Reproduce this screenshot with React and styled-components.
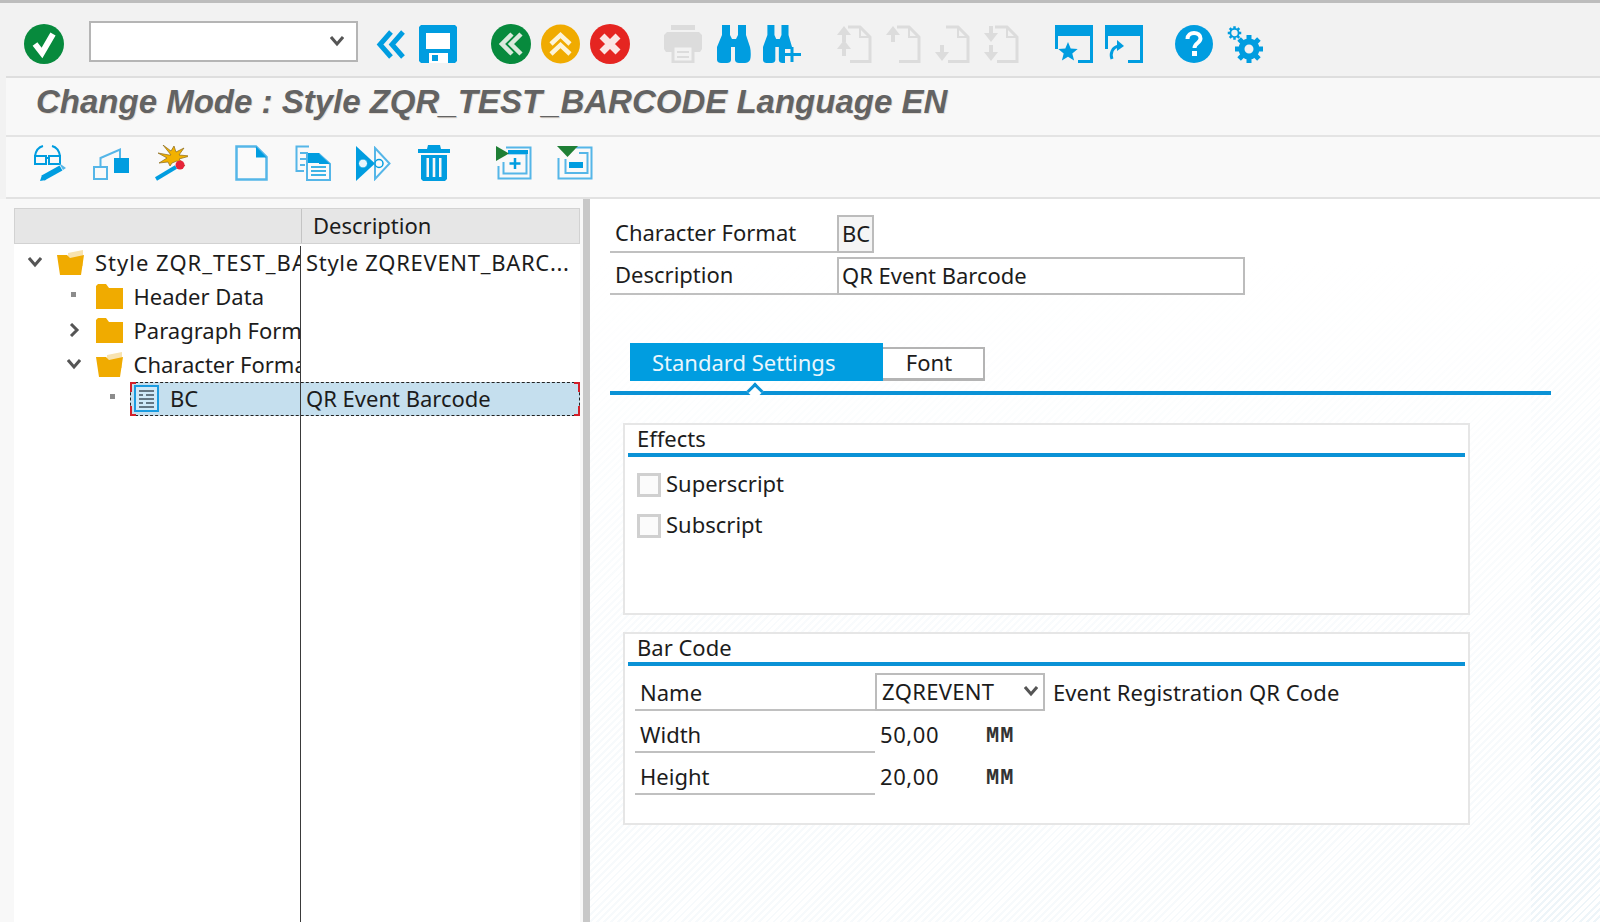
import React from 'react'
import styled, { createGlobalStyle } from 'styled-components'

const BLUE = '#009de0'
const LIGHT = '#55b6e8'
const OFF = '#dcdcdc'
const FONT = '"Noto Sans", "Open Sans", sans-serif'

const Global = createGlobalStyle`
  html, body { margin: 0; height: 100%; overflow: hidden; }
  body { font-family: ${FONT}; background: #f2f2f2; color: #1c1c1c; }
`

const Svg = ({ w, h, children }) => (
  <svg width={w} height={h} viewBox={`0 0 ${w} ${h}`} fill="none">{children}</svg>
)

const CheckIcon = () => (
  <Svg w={40} h={40}>
    <circle cx="20" cy="20" r="20" fill="#078a3d" />
    <path d="M11 20l7 9 11-19" stroke="#fff" strokeWidth="6" />
  </Svg>
)
const DoubleLeft = () => (
  <Svg w={30} h={29}>
    <path d="M15 2L4 14.500 15 27M27 2L16 14.500 27 27" stroke={BLUE} strokeWidth="5" />
  </Svg>
)
const SaveIcon = () => (
  <Svg w={38} h={38}>
    <path d="M2 0h34l2 2v34l-2 2H2l-2-2V2z" fill={BLUE} />
    <path d="M7 8h24v16H7zM10 28h19v10H10z" fill="#fff" />
    <path d="M13 30h6v6h-6z" fill={BLUE} />
  </Svg>
)
const RoundBack = () => (
  <Svg w={40} h={40}>
    <circle cx="20" cy="20" r="20" fill="#078a3d" />
    <path d="M21 10l-10 10 10 10M30 10L20 20l10 10" stroke="#dbe9dd" strokeWidth="4.500" />
  </Svg>
)
const RoundUp = () => (
  <Svg w={39} h={40}>
    <circle cx="19.500" cy="20" r="19.500" fill="#f0ab00" />
    <path d="M10 20l9.500-9 9.500 9M10 30l9.500-9 9.500 9" stroke="#fdf4d8" strokeWidth="4.500" />
  </Svg>
)
const RoundCancel = () => (
  <Svg w={40} h={40}>
    <circle cx="20" cy="20" r="20" fill="#e52521" />
    <path d="M12 12l16 16M28 12L12 28" stroke="#fbe6e4" strokeWidth="7" />
  </Svg>
)
const PrintIcon = () => (
  <Svg w={38} h={38}>
    <path d="M7 0h24v5H7zM3 7h32l3 3v14l-2 3H2l-2-3V10z" fill={OFF} />
    <path d="M8 20h22v18H8z" fill="#f2f2f2" />
    <path d="M9 21h20v16H9z" stroke={OFF} strokeWidth="3" />
    <path d="M13 27h12M13 32h12" stroke={OFF} strokeWidth="2" />
  </Svg>
)
const BINO = 'M5 0h8v10l2 4h4l2-4V0h8v10l4 12c1 4 1 10 0 13-1 2-3 3-5 3h-6c-2 0-4-1-4-3V22h-4v13c0 2-2 3-4 3H4c-2 0-4-1-4-3-1-3-1-9 0-13L5 10z'
const FindIcon = () => (
  <Svg w={34} h={38}><path d={BINO} fill={BLUE} /></Svg>
)
const FindNextIcon = () => (
  <Svg w={38} h={38}>
    <path d={BINO} fill={BLUE} transform="scale(.88 1)" />
    <path d="M22 24h16v14H22z" fill="#f2f2f2" />
    <path d="M29 22v15M21 29.500h17" stroke={BLUE} strokeWidth="3" />
  </Svg>
)
const PageIcon = ({ top, bottom }) => (
  <Svg w={35} h={38}>
    <path d="M11 2h12l10 10v24.500H13" stroke={OFF} strokeWidth="3" />
    <path d="M23 2v10h10" stroke={OFF} strokeWidth="2" />
    {top === 'up' && <path d="M7 1l7 9H9v7H5v-7H0z" fill={OFF} />}
    {top === 'down' && <path d="M7 17l7-9H9V1H5v7H0z" fill={OFF} />}
    {bottom === 'up' && <path d="M7 15l7 9H9v7H5v-7H0z" fill={OFF} />}
    {bottom === 'down' && <path d="M7 36l7-9H9v-7H5v7H0z" fill={OFF} />}
  </Svg>
)
const WindowFrame = ({ children }) => (
  <Svg w={38} h={38}>
    <path d="M0 0h38v38H23v-3h12V11H3v13H0z" fill={BLUE} />
    {children}
  </Svg>
)
const HelpIcon = () => (
  <Svg w={38} h={40}>
    <circle cx="19" cy="20" r="19" fill={BLUE} />
    <path d="M12.500 15c0-4 3-6 6.500-6s6.500 2 6.500 5.500c0 4.500-6 4.500-6 9.500" stroke="#fff" strokeWidth="4" />
    <path d="M17 27h5v5h-5z" fill="#fff" />
  </Svg>
)
const Gear = ({ cx, cy, r, tooth, sw, fillHole }) => (
  <g fill={BLUE}>
    {[0, 45, 90, 135, 180, 225, 270, 315].map((a) => (
      <rect key={a} x={cx - tooth / 2} y={cy - r - tooth * 0.7} width={tooth} height={tooth} transform={`rotate(${a} ${cx} ${cy})`} />
    ))}
    <circle cx={cx} cy={cy} r={r - sw / 2} fill={fillHole} stroke={BLUE} strokeWidth={sw} />
  </g>
)
const GearsIcon = () => (
  <Svg w={37} h={38}>
    <Gear cx={7.500} cy={8} r={5} tooth={2.500} sw={1.800} fillHole="#f2f2f2" />
    <Gear cx={22} cy={24} r={10.500} tooth={5} sw={6} fillHole="#f2f2f2" />
  </Svg>
)

const GlassesIcon = () => (
  <Svg w={35} h={36}>
    <path d="M2 11h11v8H2zM16 11h11v8H16zM13 13h3M2 11C3 5 6 2 10 1M27 11c-1-6-4-9-8-10" stroke={BLUE} strokeWidth="2" />
    <path d="M10 33l18-10" stroke={BLUE} strokeWidth="6" />
    <path d="M7 36l2-6 4 5z" fill={BLUE} />
    <path d="M26 18l7 5-3 2z" fill={LIGHT} />
  </Svg>
)
const HierarchyIcon = () => (
  <Svg w={36} h={33}>
    <path d="M1 20h13v12H1zM7.500 20v-9L27 2.500V11" stroke={LIGHT} strokeWidth="2" />
    <path d="M21 11h15v15H21z" fill={BLUE} />
  </Svg>
)
const WandIcon = () => (
  <Svg w={34} h={36}>
    <path d="M17 10L9 0l8 6 3-5 2 6 8-4-5 7 11 1-11 3 6 7-8-5-5 2-2 3-2-4-9 1 8-5-9-5 11 2z" fill="#f2b100" stroke="#8a6a1c" strokeWidth=".7" />
    <path d="M2 34l20-12" stroke={BLUE} strokeWidth="4" />
    <circle cx="26" cy="20" r="4.500" fill="#e6243a" />
  </Svg>
)
const DocIcon = () => (
  <Svg w={33} h={36}>
    <path d="M1.500 1.500H21L31.500 12v22.500h-30z" fill="#fafafa" stroke={LIGHT} strokeWidth="2.500" />
    <path d="M21 1.500L31.500 12.500H21z" fill={BLUE} />
  </Svg>
)
const CopyIcon = () => (
  <Svg w={36} h={36}>
    <path d="M14 1.500H1.500V26H9M5 8h8M5 14h6M5 20h5" stroke={LIGHT} strokeWidth="2" />
    <path d="M12 9h12l11 10v16H12z" fill="#fafafa" stroke={LIGHT} strokeWidth="2" />
    <path d="M13 8h11l2 10H13z" fill={BLUE} />
    <path d="M24 9l11 10H24z" fill={BLUE} />
    <path d="M16 22h15M16 26h15M16 30h15" stroke={BLUE} strokeWidth="1.500" />
  </Svg>
)
const VariantIcon = () => (
  <Svg w={35} h={35}>
    <path d="M0 0l19 17.500L0 35z" fill={BLUE} />
    <path d="M19 2l14.500 15.500L19 33z" fill="#fafafa" stroke={LIGHT} strokeWidth="2" />
    <circle cx="7" cy="17.500" r="4.500" fill="#e8f5fc" stroke={BLUE} />
    <circle cx="23" cy="17.500" r="4" fill="#fafafa" stroke={BLUE} strokeWidth="1.500" />
  </Svg>
)
const TrashIcon = () => (
  <Svg w={32} h={36}>
    <path d="M10 0h12l1 4h9v4H0V4h9z" fill={BLUE} />
    <path d="M3 10h26v24l-2 2H5l-2-2z" fill={BLUE} />
    <path d="M8.500 13h2.500v19H8.500zM14.700 13h2.600v19h-2.600zM21 13h2.500v19H21z" fill="#f8f8f8" />
  </Svg>
)
const AddIcon = () => (
  <Svg w={36} h={34}>
    <path d="M10 1.500h24.500v31H2.500V20" stroke={LIGHT} strokeWidth="2" />
    <path d="M12 7.500h18.500v20H7.500V16" stroke={LIGHT} strokeWidth="2" />
    <path d="M12 4h20v4H12z" fill={BLUE} />
    <path d="M19 12v11M13.500 17.500h11" stroke={BLUE} strokeWidth="2.500" />
    <path d="M0 0l13 7.500L0 15z" fill="#1f7f35" />
  </Svg>
)
const RemoveIcon = () => (
  <Svg w={36} h={34}>
    <path d="M19 1.500h15.500v31H1.500V12" stroke={LIGHT} strokeWidth="2" />
    <path d="M22 7h8.500v20H8.500V13" stroke={LIGHT} strokeWidth="2" />
    <path d="M12 16h14v6H12z" fill={BLUE} />
    <path d="M0 0h21L10.500 11z" fill="#1f7f35" />
  </Svg>
)

const FolderClosed = () => (
  <Svg w={27} h={25}>
    <path d="M0 2l2-2h8l3 4h14v21H0z" fill="#f0ab00" />
  </Svg>
)
const FolderOpen = () => (
  <Svg w={27} h={25}>
    <path d="M11 3l15-3v16H11z" fill="#f8e3b0" />
    <path d="M0 5h10l3 3 14-3-3 20H3z" fill="#f0ab00" />
  </Svg>
)
const FormatIcon = () => (
  <Svg w={25} h={27}>
    <path d="M1 1h23v25H1z" fill="#cfe9f8" stroke="#1a9be0" strokeWidth="2" />
    <path d="M5 6h15M5 10h4M12 10h8M5 14h15M5 18h4M12 18h8M5 22h15" stroke="#41525e" strokeWidth="1.500" />
  </Svg>
)
const Chevron = ({ dir }) => (
  <Svg w={14} h={14}>
    {dir === 'down'
      ? <path d="M1 3l6 7 6-7" stroke="#555" strokeWidth="3" />
      : <path d="M4 1l6 6-6 6" stroke="#555" strokeWidth="3" />}
  </Svg>
)

const Page = styled.div`
  height: 100vh;
  display: flex;
  flex-direction: column;
  border-top: 3px solid #bdbdbd;
  box-sizing: border-box;
  overflow: hidden;
`
const Toolbar = styled.div`
  flex: none;
  height: 73px;
  box-sizing: border-box;
  padding: 9px 0 0 24px;
  display: flex;
  align-items: center;
`
const Tool = styled.span`
  flex: none;
  display: flex;
  margin-left: ${({ $gap }) => $gap || 0}px;
`
const CommandField = styled.div`
  flex: none;
  width: 269px;
  height: 41px;
  margin: 0 0 6px 25px;
  box-sizing: border-box;
  border: 2px solid #b5b5b5;
  background: #fff;
  display: flex;
  align-items: center;
  justify-content: flex-end;
  padding-right: 12px;
`
const TitleBar = styled.div`
  flex: none;
  height: 61px;
  box-sizing: border-box;
  margin-left: 6px;
  padding: 0 0 9px 30px;
  display: flex;
  align-items: center;
  border-top: 2px solid #dedede;
  border-bottom: 2px solid #e4e4e4;
  background: #f8f8f8;
  font: italic bold 33px "Liberation Sans", Arial, sans-serif;
  color: #636363;
  text-shadow: 1px 1px 0 rgba(190, 170, 150, .35);
`
const AppToolbar = styled.div`
  flex: none;
  height: 62px;
  box-sizing: border-box;
  margin-left: 6px;
  padding: 0 0 8px 27px;
  display: flex;
  align-items: center;
  background: #f9f9f9;
  border-bottom: 2px solid #e2e2e2;
`
const Workspace = styled.div`
  flex: 1;
  min-height: 0;
  display: flex;
`
const TreePanel = styled.div`
  flex: none;
  width: 583px;
  box-sizing: border-box;
  padding: 9px 3px 0 14px;
  background: #f8f8f8;
  display: flex;
`
const Splitter = styled.div`
  flex: none;
  width: 7px;
  background: #c8c8c8;
`
const Tree = styled.div`
  flex: 1;
  display: flex;
  flex-direction: column;
  background: #fff;
  font-size: 22px;
  white-space: nowrap;
`
const TreeHead = styled.div`
  flex: none;
  height: 36px;
  margin-bottom: 2px;
  box-sizing: border-box;
  display: grid;
  grid-template-columns: 286px 1fr;
  background: #e6e6e6;
  border: 1px solid #d2d2d2;
`
const HeadCell = styled.div`
  border-left: 1px solid ${({ $plain }) => ($plain ? 'transparent' : '#c4c4c4')};
  padding-left: 11px;
  line-height: 33px;
`
const TreeRow = styled.div`
  position: relative;
  flex: none;
  height: 34px;
  display: grid;
  grid-template-columns: 286px 1fr;

  ${({ $selected }) => $selected && `
    &::before {
      content: '';
      position: absolute;
      left: 116px;
      right: 0;
      top: 0;
      bottom: 0;
      background: #c5dfee;
      border: 1px dashed #222;
    }
    &::after {
      content: '';
      position: absolute;
      left: 116px;
      right: 0;
      top: 0;
      bottom: 0;
      background:
        linear-gradient(#d3202a, #d3202a) 0 0 / 6px 2px no-repeat,
        linear-gradient(#d3202a, #d3202a) 0 0 / 2px 10px no-repeat,
        linear-gradient(#d3202a, #d3202a) 0 100% / 6px 2px no-repeat,
        linear-gradient(#d3202a, #d3202a) 0 100% / 2px 10px no-repeat,
        linear-gradient(#d3202a, #d3202a) 100% 0 / 6px 2px no-repeat,
        linear-gradient(#d3202a, #d3202a) 100% 0 / 2px 10px no-repeat,
        linear-gradient(#d3202a, #d3202a) 100% 100% / 6px 2px no-repeat,
        linear-gradient(#d3202a, #d3202a) 100% 100% / 2px 10px no-repeat;
    }
  `}
`
const NodeCell = styled.div`
  position: relative;
  z-index: 1;
  overflow: hidden;
  display: flex;
  align-items: center;
  padding: 0 0 2px ${({ $depth }) => 14 + $depth * 38.5}px;
  letter-spacing: ${({ $caps }) => ($caps ? 1 : 0)}px;
`
const Twisty = styled.span`
  flex: none;
  width: 14px;
  margin-right: 15px;
  display: flex;
  justify-content: center;
`
const Bullet = styled.span`
  width: 5px;
  height: 5px;
  background: #8c8c8c;
  margin-bottom: 4px;
`
const NodeIcon = styled.span`
  flex: none;
  display: flex;
  margin-right: 11px;
`
const DescCell = styled.div`
  position: relative;
  z-index: 1;
  border-left: 1px solid #3a3a3a;
  padding-left: 5px;
  line-height: 33px;
  overflow: hidden;
  letter-spacing: ${({ $caps }) => ($caps ? 0.7 : 0)}px;
`
const TreeFill = styled.div`
  flex: 1;
  margin-left: 286px;
  border-left: 1px solid #3a3a3a;
`
const Detail = styled.div`
  flex: 1;
  min-width: 0;
  box-sizing: border-box;
  padding: 16px 0 0 20px;
  font-size: 22px;
  background:
    linear-gradient(to right, rgba(255, 255, 255, .55) 0 941px, transparent 941px),
    linear-gradient(to bottom, #fff 60px, rgba(255, 255, 255, .2) 420px, transparent 560px),
    repeating-linear-gradient(135deg, #eef5f9 0 2px, #fff 2px 5px);
`
const FieldRow = styled.div`
  display: flex;
  align-items: stretch;
  height: 38px;
  margin-bottom: ${({ $after }) => $after || 0}px;
`
const FieldLabel = styled.div`
  flex: none;
  width: ${({ $width }) => $width || 227}px;
  box-sizing: border-box;
  padding-left: 5px;
  border-bottom: 2px solid #c0c0c0;
  line-height: ${({ $line }) => $line || 35}px;
`
const FieldBox = styled.div`
  flex: none;
  width: ${({ $width }) => $width}px;
  box-sizing: border-box;
  border: 2px solid #bcbcbc;
  background: ${({ $readonly }) => ($readonly ? '#f5f5f5' : '#fff')};
  padding: 0 ${({ $pad }) => $pad || 3}px 2px;
  line-height: 31px;
  display: flex;
  justify-content: space-between;
  align-items: center;
  letter-spacing: ${({ $caps }) => ($caps ? 0.3 : 0)}px;
`
const TabStrip = styled.div`
  height: 38px;
  margin: 48px 0 0 20px;
  display: flex;
  align-items: flex-end;
`
const Tab = styled.div`
  box-sizing: border-box;
  width: ${({ $width }) => $width}px;
  height: ${({ $active }) => ($active ? 38 : 34)}px;
  padding: 0 ${({ $active }) => ($active ? 0 : 8)}px 0 ${({ $active }) => ($active ? 22 : 0)}px;
  text-align: ${({ $active }) => ($active ? 'left' : 'center')};
  line-height: ${({ $active }) => ($active ? 38 : 27)}px;
  color: ${({ $active }) => ($active ? '#e9f6fd' : '#1c1c1c')};
  background: ${({ $active }) => ($active ? BLUE : '#fff')};
  border: ${({ $active }) => ($active ? 'none' : '2px solid #b4b4b4')};
  border-left: none;
  border-bottom-width: ${({ $active }) => ($active ? 0 : 3)}px;
`
const TabRule = styled.div`
  position: relative;
  width: 941px;
  height: 4px;
  margin: 10px 0 28px;
  background: #0a92d6;

  &::before {
    content: '';
    position: absolute;
    left: 139px;
    top: -6px;
    width: 9px;
    height: 9px;
    background: #fff;
    border-top: 3px solid #0a92d6;
    border-left: 3px solid #0a92d6;
    transform: rotate(45deg);
  }
`
const Group = styled.section`
  width: 847px;
  height: ${({ $height }) => $height}px;
  margin: 0 0 ${({ $after }) => $after || 0}px 13px;
  box-sizing: border-box;
  padding: 0 3px;
  border: 2px solid #e6e6e6;
  background: #fff;
`
const GroupTitle = styled.div`
  height: 28px;
  padding-left: 9px;
  line-height: 26px;
  border-bottom: 4px solid #0a92d6;
  margin-bottom: ${({ $after }) => $after}px;
`
const CheckRow = styled.label`
  display: flex;
  align-items: center;
  height: 24px;
  margin: 0 0 17px 9px;
  gap: 5px;
`
const CheckBox = styled.span`
  width: 24px;
  height: 24px;
  box-sizing: border-box;
  border: 3px solid #d0d0d0;
  background: #fbfbfb;
`
const CheckText = styled.span`
  margin-bottom: 4px;
`
const ValueRow = styled.div`
  display: flex;
  align-items: stretch;
  height: 38px;
  margin: 0 0 4px 7px;
`
const Value = styled.div`
  flex: none;
  width: ${({ $width }) => $width}px;
  padding-left: ${({ $pad }) => $pad || 0}px;
  box-sizing: border-box;
  line-height: 38px;
  white-space: nowrap;
  letter-spacing: ${({ $spaced }) => ($spaced ? 0.6 : 0.1)}px;
`
const Unit = styled.div`
  font: bold 22px "Liberation Mono", monospace;
  line-height: 44px;
  letter-spacing: 1px;
  color: #333;
`

const App = () => (
  <Page>
    <Global />
    <Toolbar>
      <Tool><CheckIcon /></Tool>
      <CommandField><Chevron dir="down" /></CommandField>
      <Tool $gap={18}><DoubleLeft /></Tool>
      <Tool $gap={13}><SaveIcon /></Tool>
      <Tool $gap={34}><RoundBack /></Tool>
      <Tool $gap={10}><RoundUp /></Tool>
      <Tool $gap={10}><RoundCancel /></Tool>
      <Tool $gap={34}><PrintIcon /></Tool>
      <Tool $gap={15}><FindIcon /></Tool>
      <Tool $gap={12}><FindNextIcon /></Tool>
      <Tool $gap={36}><PageIcon top="up" bottom="up" /></Tool>
      <Tool $gap={14}><PageIcon top="up" /></Tool>
      <Tool $gap={14}><PageIcon bottom="down" /></Tool>
      <Tool $gap={14}><PageIcon top="down" bottom="down" /></Tool>
      <Tool $gap={36}>
        <WindowFrame>
          <path d="M13 17l2.700 6.500 7 .5-5.400 4.500 1.800 7-6.100-3.800L6.900 35.500l1.800-7L3.300 24l7-.5z" fill={BLUE} />
        </WindowFrame>
      </Tool>
      <Tool $gap={12}>
        <WindowFrame>
          <path d="M7 34c-2-5 0-12 7-13" stroke={BLUE} strokeWidth="3" />
          <path d="M12 15l7 6-7 5z" fill={BLUE} />
        </WindowFrame>
      </Tool>
      <Tool $gap={32}><HelpIcon /></Tool>
      <Tool $gap={14}><GearsIcon /></Tool>
    </Toolbar>
    <TitleBar>Change Mode : Style ZQR_TEST_BARCODE Language EN</TitleBar>
    <AppToolbar>
      <Tool><GlassesIcon /></Tool>
      <Tool $gap={25}><HierarchyIcon /></Tool>
      <Tool $gap={25}><WandIcon /></Tool>
      <Tool $gap={47}><DocIcon /></Tool>
      <Tool $gap={27}><CopyIcon /></Tool>
      <Tool $gap={25}><VariantIcon /></Tool>
      <Tool $gap={27}><TrashIcon /></Tool>
      <Tool $gap={46}><AddIcon /></Tool>
      <Tool $gap={25}><RemoveIcon /></Tool>
    </AppToolbar>
    <Workspace>
      <TreePanel>
        <Tree>
          <TreeHead>
            <HeadCell $plain />
            <HeadCell>Description</HeadCell>
          </TreeHead>
          <TreeRow>
            <NodeCell $depth={0} $caps>
              <Twisty><Chevron dir="down" /></Twisty>
              <NodeIcon><FolderOpen /></NodeIcon>
              Style ZQR_TEST_BARCODE
            </NodeCell>
            <DescCell $caps>Style ZQREVENT_BARC...</DescCell>
          </TreeRow>
          <TreeRow>
            <NodeCell $depth={1}>
              <Twisty><Bullet /></Twisty>
              <NodeIcon><FolderClosed /></NodeIcon>
              Header Data
            </NodeCell>
            <DescCell />
          </TreeRow>
          <TreeRow>
            <NodeCell $depth={1}>
              <Twisty><Chevron dir="right" /></Twisty>
              <NodeIcon><FolderClosed /></NodeIcon>
              Paragraph Formats
            </NodeCell>
            <DescCell />
          </TreeRow>
          <TreeRow>
            <NodeCell $depth={1}>
              <Twisty><Chevron dir="down" /></Twisty>
              <NodeIcon><FolderOpen /></NodeIcon>
              Character Formats
            </NodeCell>
            <DescCell />
          </TreeRow>
          <TreeRow $selected>
            <NodeCell $depth={2}>
              <Twisty><Bullet /></Twisty>
              <NodeIcon><FormatIcon /></NodeIcon>
              BC
            </NodeCell>
            <DescCell>QR Event Barcode</DescCell>
          </TreeRow>
          <TreeFill />
        </Tree>
      </TreePanel>
      <Splitter />
      <Detail>
        <FieldRow $after={4}>
          <FieldLabel>Character Format</FieldLabel>
          <FieldBox $width={37} $readonly>BC</FieldBox>
        </FieldRow>
        <FieldRow>
          <FieldLabel>Description</FieldLabel>
          <FieldBox $width={408}>QR Event Barcode</FieldBox>
        </FieldRow>
        <TabStrip>
          <Tab $active $width={253}>Standard Settings</Tab>
          <Tab $width={102}>Font</Tab>
        </TabStrip>
        <TabRule />
        <Group $height={192} $after={17}>
          <GroupTitle $after={16}>Effects</GroupTitle>
          <CheckRow><CheckBox /><CheckText>Superscript</CheckText></CheckRow>
          <CheckRow><CheckBox /><CheckText>Subscript</CheckText></CheckRow>
        </Group>
        <Group $height={193}>
          <GroupTitle $after={7}>Bar Code</GroupTitle>
          <ValueRow>
            <FieldLabel $width={240} $line={38}>Name</FieldLabel>
            <FieldBox $width={170} $pad={5} $caps>ZQREVENT<Chevron dir="down" /></FieldBox>
            <Value $width={400} $pad={8}>Event Registration QR Code</Value>
          </ValueRow>
          <ValueRow>
            <FieldLabel $width={240} $line={38}>Width</FieldLabel>
            <Value $width={111} $pad={5} $spaced>50,00</Value>
            <Unit>MM</Unit>
          </ValueRow>
          <ValueRow>
            <FieldLabel $width={240} $line={38}>Height</FieldLabel>
            <Value $width={111} $pad={5} $spaced>20,00</Value>
            <Unit>MM</Unit>
          </ValueRow>
        </Group>
      </Detail>
    </Workspace>
  </Page>
)

export default App
